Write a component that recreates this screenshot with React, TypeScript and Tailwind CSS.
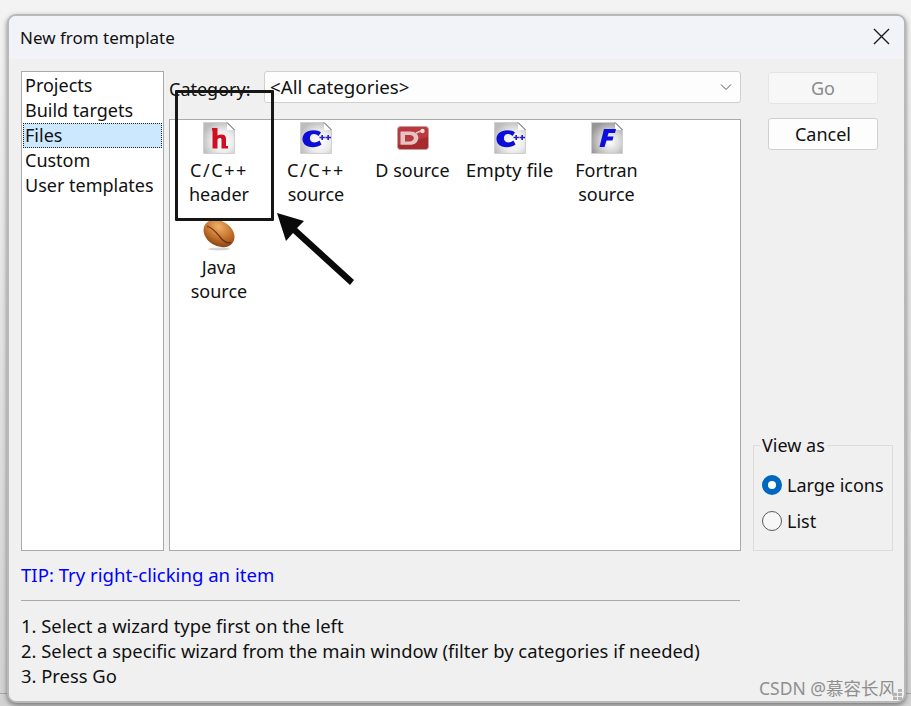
import React from "react";

const font = { fontFamily: '"Noto Sans", sans-serif' };

const DocIcon: React.FC<{ id: string; dark?: boolean; children: React.ReactNode }> = ({ id, dark, children }) => (
    <svg width="32" height="32" viewBox="0 0 32 32">
        <defs>
            <radialGradient id={id} cx="62%" cy="62%" r="68%">
                <stop offset="0%" stopColor="#ffffff" />
                <stop offset="50%" stopColor={dark ? "#d4d4d4" : "#ececec"} />
                <stop offset="100%" stopColor={dark ? "#969696" : "#bcbcbc"} />
            </radialGradient>
            <filter id={`${id}-soft`} x="-10%" y="-10%" width="120%" height="120%">
                <feGaussianBlur stdDeviation="0.35" />
            </filter>
        </defs>
        <path d="M0.5 0.5H24L31.5 8V31.5H0.5Z" fill={`url(#${id})`} stroke="#d0d0d0" />
        <path d="M24 0.5L31.5 8H24Z" fill="#ffffff" />
        <path d="M24 0.5L31.5 8" stroke="#555555" strokeWidth="1" fill="none" />
        <g filter={`url(#${id}-soft)`}>{children}</g>
    </svg>
);

const CppMark = () => (
    <>
        <path d="M21 10.5C18 7.5 9 7 4.5 11.5C1 15.5 2 22.5 8 24.5C13 26 18 25 21.5 22.5L19.5 18.5C16.5 20.8 12 21.2 10.5 18.5C9.3 16.2 10 13 12.5 12.3C15 11.7 17 12.6 18.5 14Z" fill="#0b0bd8" />
        <path d="M19.5 15.5H24.8M22.2 13V18M25.5 15.5H31M28.2 13V18" stroke="#2020c8" strokeWidth="1.6" fill="none" />
    </>
);

const HIcon = () => (
    <DocIcon id="doc-h">
        <path d="M9 6H14.5V13.5C17 12.2 20 12 21.5 13.3C23 14.5 23 16 23 18V24H25V26.5H18.5V18C18.5 16.6 17.8 16 16.8 16C15.8 16 14.5 16.8 14.5 18V26.5H9.5V8.5H9Z" fill="#d01020" />
    </DocIcon>
);

const DIcon = () => (
    <svg width="32" height="32" viewBox="0 0 32 32">
        <rect x="0.5" y="4.5" width="31" height="23" rx="3" fill="#b83a3e" stroke="#c9a0a0" />
        <path d="M1 23L31 15V24.5A3 3 0 0 1 28 27H4A3 3 0 0 1 1 24.5Z" fill="#a62a2e" />
        <path d="M3.5 9.5H13C19 9.5 21.5 12.5 21.3 16C21 20 18 22.8 13 22.8H3.5Z" fill="#e6c4c4" />
        <path d="M8 13H12.5C15.5 13 17 14.5 16.8 16.3C16.5 18.2 15 19.5 12.5 19.5H8Z" fill="#b83a3e" />
        <path d="M19 11L24 9" stroke="#e6c4c4" strokeWidth="1.6" fill="none" />
        <circle cx="25.5" cy="9" r="2.2" fill="#f0dada" />
    </svg>
);

const FortranIcon = () => (
    <DocIcon id="doc-f" dark>
        <path d="M13 7H25L24 11H17.5L16.5 14.5H22.5L21.5 18.5H15.5L13.5 25H8.5Z" fill="#0a0ae0" />
    </DocIcon>
);

const BeanIcon = () => (
    <svg width="32" height="32" viewBox="0 0 32 32">
        <defs>
            <radialGradient id="bean" cx="38%" cy="28%" r="80%">
                <stop offset="0%" stopColor="#f0b26a" />
                <stop offset="55%" stopColor="#c4702a" />
                <stop offset="100%" stopColor="#7c3e14" />
            </radialGradient>
        </defs>
        <ellipse cx="16" cy="30" rx="11" ry="1.5" fill="#d4d4d4" />
        <ellipse cx="16" cy="14.5" rx="16.5" ry="12.5" fill="url(#bean)" transform="rotate(32 16 14.5)" />
        <path d="M4 7C10 9 13 13 17 18C20 22 24 24.5 28 23.5" stroke="#6a3210" strokeWidth="1.3" fill="none" />
    </svg>
);

const wizards: { label: string[]; icon: React.ReactNode; textClass?: string }[] = [
    { label: ["C/C++", "header"], icon: <HIcon />, textClass: "pl-[1px]" },
    { label: ["C/C++", "source"], icon: <DocIcon id="doc-c1"><CppMark /></DocIcon>, textClass: "pl-[1px]" },
    { label: ["D source"], icon: <DIcon /> },
    { label: ["Empty file"], icon: <DocIcon id="doc-c2"><CppMark /></DocIcon>, textClass: "text-[18.8px]" },
    { label: ["Fortran", "source"], icon: <FortranIcon /> },
    { label: ["Java", "source"], icon: <BeanIcon />, textClass: "pl-[1px]" },
];

const categories = ["Projects", "Build targets", "Files", "Custom", "User templates"];

export default function App() {
    return (
        <div style={font} className="relative w-[911px] h-[706px] overflow-hidden bg-linear-to-b from-[#f3f3f3] to-[#d2d2d2] pt-[14px] pl-[7px] text-[18px] text-[#111111]">
            {/* Edge of the window behind the dialog */}
            <div className="absolute left-0 right-0 top-[693px] border-t border-[#a8a8a8]"></div>

            {/* Dialog */}
            <div className="relative w-[899px] h-[689px] rounded-[9px] border-2 border-[#b8b8b8] bg-[#f0f0f0] overflow-hidden shadow-[0_2px_5px_rgba(0,0,0,0.45)]">
                {/* Title bar */}
                <div className="h-[43px] bg-[#f2f3f8] flex items-center justify-between pl-[11px] pr-[13px]">
                    <span className="text-[17px] leading-[38px]">New from template</span>
                    <svg width="18" height="18" viewBox="0 0 18 18" className="mb-[3px] mr-[1px]">
                        <path d="M2 2L17 17M17 2L2 17" stroke="#1a1a1a" strokeWidth="1.4" fill="none" />
                    </svg>
                </div>

                {/* Body */}
                <div className="flex pl-[12px] pt-[12px]">
                    <div className="w-[720px]">
                        <div className="flex gap-[5px] h-[480px]">
                            {/* Category list */}
                            <div className="w-[143px] bg-white border border-[#a9a9a9] pt-[1px] pl-[1px] pr-[1px]">
                                {categories.map((c) => (
                                    <div
                                        key={c}
                                        className={`h-[25px] pl-[2px] leading-[25px] whitespace-nowrap ${c === "Files" ? "bg-[#cce8ff] outline-1 outline-dotted outline-[#222222] -outline-offset-1" : ""}`}
                                    >
                                        {c}
                                    </div>
                                ))}
                            </div>

                            <div className="w-[572px] flex flex-col">
                                {/* Category filter */}
                                <div className="h-[32px] flex">
                                    <span className="w-[95px] leading-[36px] whitespace-nowrap">Category:</span>
                                    <div className="flex-1 flex items-center justify-between bg-[#fdfdfd] border border-[#d0d0d0] rounded-[3px] pl-[5px] pr-[7px]">
                                        <span className="leading-[30px] text-[18.7px]">&lt;All categories&gt;</span>
                                        <svg width="14" height="14" viewBox="0 0 14 14">
                                            <path d="M2 4.5L7 9.5L12 4.5" stroke="#555555" strokeWidth="1" fill="none" />
                                        </svg>
                                    </div>
                                </div>

                                {/* Wizards */}
                                <div className="mt-[16px] flex-1 bg-white border border-[#a9a9a9] pt-[2px] flex flex-wrap content-start">
                                    {wizards.map((w) => (
                                        <div key={w.label.join()} className="w-[97px] h-[97px] flex flex-col items-center">
                                            {w.icon}
                                            <div className={`mt-[4px] text-center leading-[24px] ${w.textClass ?? ""}`}>
                                                {w.label.map((l) => (
                                                    <div key={l} className={`whitespace-nowrap ${l === "C/C++" ? "tracking-[1.6px]" : ""}`}>{l}</div>
                                                ))}
                                            </div>
                                        </div>
                                    ))}
                                </div>
                            </div>
                        </div>

                        <div className="mt-[11px] h-[25px] leading-[25px] text-[18.6px] text-[#0000ff]">TIP: Try right-clicking an item</div>
                        <div className="mt-[13px] mr-[1px] border-t border-[#a9a9a9]"></div>
                        <div className="mt-[12px] leading-[25px] whitespace-nowrap text-[18.4px]">
                            <div>1. Select a wizard type first on the left</div>
                            <div>2. Select a specific wizard from the main window (filter by categories if needed)</div>
                            <div>3. Press Go</div>
                        </div>
                    </div>

                    {/* Right column */}
                    <div className="ml-[12px] w-[140px] h-[480px] flex flex-col">
                        <div className="ml-[15px] w-[110px] h-[32px] mt-[1px] rounded-[3px] bg-[#f7f7f7] border border-[#e4e4e4] text-center leading-[30px] text-[#8a8a8a]">Go</div>
                        <div className="ml-[15px] w-[110px] h-[32px] mt-[14px] rounded-[3px] bg-[#fdfdfd] border border-[#d0d0d0] text-center leading-[30px]">Cancel</div>
                        <div className="mt-auto relative h-[106px] border border-[#dcdcdc] pl-[8px] pt-[21px]">
                            <span className="absolute left-[6px] -top-[13px] bg-[#f0f0f0] px-[2px] leading-[25px]">View as</span>
                            <div className="flex items-center gap-[5px] h-[36px]">
                                <span className="w-[20px] h-[20px] rounded-full border-[6px] border-[#0067c0] bg-white"></span>
                                <span>Large icons</span>
                            </div>
                            <div className="flex items-center gap-[5px] h-[36px]">
                                <span className="w-[20px] h-[20px] rounded-full border border-[#5a5a5a] bg-[#f7f7f7]"></span>
                                <span>List</span>
                            </div>
                        </div>
                    </div>
                </div>
            </div>

            {/* Annotation drawn over the dialog */}
            <div className="absolute left-[175px] top-[90px] w-[99px] h-[131px] border-[3px] border-[#161616] rounded-[1px]"></div>
            <svg className="absolute left-[270px] top-[205px]" width="90" height="85" viewBox="0 0 90 85">
                <path d="M7 8L34 16L27 23L84 75L80 80L23 28L16 36Z" fill="#0a0a0a" />
            </svg>

            {/* Watermark and resize grip */}
            <span
                style={{ fontFamily: '"Noto Sans", "Noto Sans CJK SC", sans-serif' }}
                className="absolute left-[759px] top-[676px] text-[17.5px] leading-[24px] text-[#8f8f8f] whitespace-nowrap"
            >
                CSDN @慕容长风
            </span>
            <svg className="absolute left-[892px] top-[688px]" width="11" height="12" viewBox="0 0 11 12">
                <path d="M6 1h4v3h-4zM1 5h4v3h-4zM6 5h4v3h-4zM1 9h4v3h-4zM6 9h4v3h-4z" fill="#b5b5b5" />
            </svg>
        </div>
    );
}
